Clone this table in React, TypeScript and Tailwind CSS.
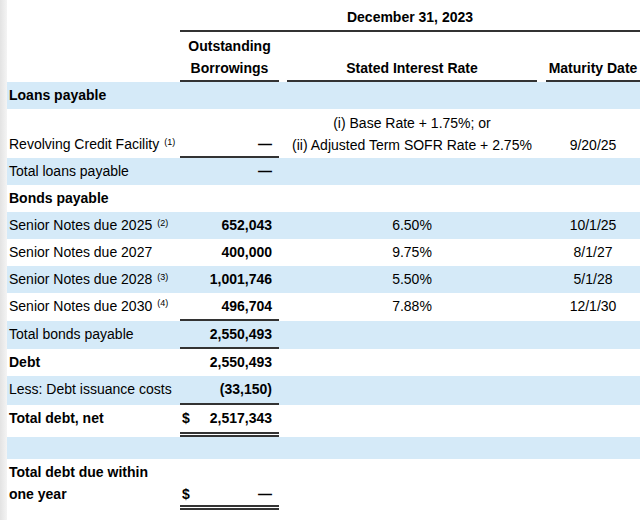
import clsx from "clsx";
import type { ReactNode } from "react";

const GRID = "grid grid-cols-[173px_99px_8px_250px_9px_94px]";

type RowProps = {
  blue?: boolean;
  h: string;
  label?: ReactNode;
  bold?: boolean;
  amt?: ReactNode;
  dollar?: boolean;
  rate?: ReactNode;
  date?: ReactNode;
  line?: "single" | "double";
};

function Row({ blue, h, label, bold, amt, dollar, rate, date, line }: RowProps) {
  const pad = line === "double" ? "pb-[5px]" : line === "single" ? "pb-[2px]" : "";
  return (
    <div className={clsx(GRID, h, blue && "bg-[#d5eaf8]")}>
      <div className={clsx("flex items-center pl-[2px] whitespace-nowrap", pad, bold && "font-bold")}>
        {label}
      </div>
      <div
        className={clsx(
          "flex items-center font-bold pl-[2px] pr-[7px]",
          dollar ? "justify-between" : "justify-end",
          line === "single" && "border-b-2 border-[#333]",
          line === "double" && "border-b-[5px] border-double border-[#333]"
        )}
      >
        {dollar && <span>$</span>}
        <span>{amt}</span>
      </div>
      <div className={pad} />
      <div className={clsx("flex items-center justify-center", pad)}>{rate}</div>
      <div className={pad} />
      <div className={clsx("flex items-center justify-center", pad)}>{date}</div>
    </div>
  );
}

function Note({ n }: { n: number }) {
  return <sup className="text-[9px] ml-[5px]">({n})</sup>;
}

export default function App() {
  return (
    <div className="flex min-h-[520px] bg-white text-[14px] text-black font-['Liberation_Sans',Arial,sans-serif]">
      <div className="w-[7px] shrink-0 bg-gradient-to-r from-[#e3e3e3] to-[#f4f4f4]" />
      <div className="flex-1">
        {/* column headings */}
        <div className={clsx(GRID, "h-[32px]")}>
          <div />
          <div className="col-span-5 border-b-2 border-[#333] pt-[8px] leading-[18px] font-bold text-center">
            December 31, 2023
          </div>
        </div>
        <div className={clsx(GRID, "h-[50px] font-bold leading-[22px]")}>
          <div />
          <div className="flex flex-col justify-end items-center pb-[1px] border-b-2 border-[#333]">
            <span>Outstanding</span>
            <span>Borrowings</span>
          </div>
          <div />
          <div className="flex flex-col justify-end items-center pb-[1px] border-b-2 border-[#333]">
            <span>Stated Interest Rate</span>
          </div>
          <div />
          <div className="flex flex-col justify-end items-center pb-[1px] border-b-2 border-[#333] whitespace-nowrap">
            <span>Maturity Date</span>
          </div>
        </div>

        <Row blue h="h-[27px]" label="Loans payable" bold />

        {/* revolver spans two lines */}
        <div className={clsx(GRID, "h-[49px] leading-[22px]")}>
          <div className="flex items-end pl-[2px] pb-[3px] whitespace-nowrap">
            <span>
              Revolving Credit Facility
              <Note n={1} />
            </span>
          </div>
          <div className="flex items-end justify-end pr-[7px] pb-[1px] font-bold border-b-2 border-[#333]">
            —
          </div>
          <div />
          <div className="flex flex-col items-center justify-end pb-[2px] whitespace-nowrap">
            <span>(i) Base Rate + 1.75%; or</span>
            <span>(ii) Adjusted Term SOFR Rate + 2.75%</span>
          </div>
          <div />
          <div className="flex items-end justify-center pb-[2px]">9/20/25</div>
        </div>

        <Row blue h="h-[27px]" label="Total loans payable" amt="—" />
        <Row h="h-[27px]" label="Bonds payable" bold />
        <Row
          blue
          h="h-[27px]"
          label={<span>Senior Notes due 2025<Note n={2} /></span>}
          amt="652,043"
          rate="6.50%"
          date="10/1/25"
        />
        <Row h="h-[27px]" label="Senior Notes due 2027" amt="400,000" rate="9.75%" date="8/1/27" />
        <Row
          blue
          h="h-[27px]"
          label={<span>Senior Notes due 2028<Note n={3} /></span>}
          amt="1,001,746"
          rate="5.50%"
          date="5/1/28"
        />
        <Row
          h="h-[28px]"
          label={<span>Senior Notes due 2030<Note n={4} /></span>}
          amt="496,704"
          rate="7.88%"
          date="12/1/30"
          line="single"
        />
        <Row blue h="h-[28px]" label="Total bonds payable" amt="2,550,493" line="single" />
        <Row h="h-[27px]" label="Debt" bold amt="2,550,493" />
        <Row blue h="h-[29px]" label="Less: Debt issuance costs" amt="(33,150)" line="single" />
        <Row h="h-[32px]" label="Total debt, net" bold amt="2,517,343" dollar line="double" />
        <Row blue h="h-[22px]" />

        <div className={clsx(GRID, "h-[51px] leading-[22px] font-bold")}>
          <div className="flex items-end pl-[2px] pb-[5px]">
            <span className="w-[158px]">Total debt due within one year</span>
          </div>
          <div className="flex items-end justify-between pl-[2px] pr-[7px] border-b-[5px] border-double border-[#333]">
            <span>$</span>
            <span>—</span>
          </div>
        </div>
      </div>
    </div>
  );
}
